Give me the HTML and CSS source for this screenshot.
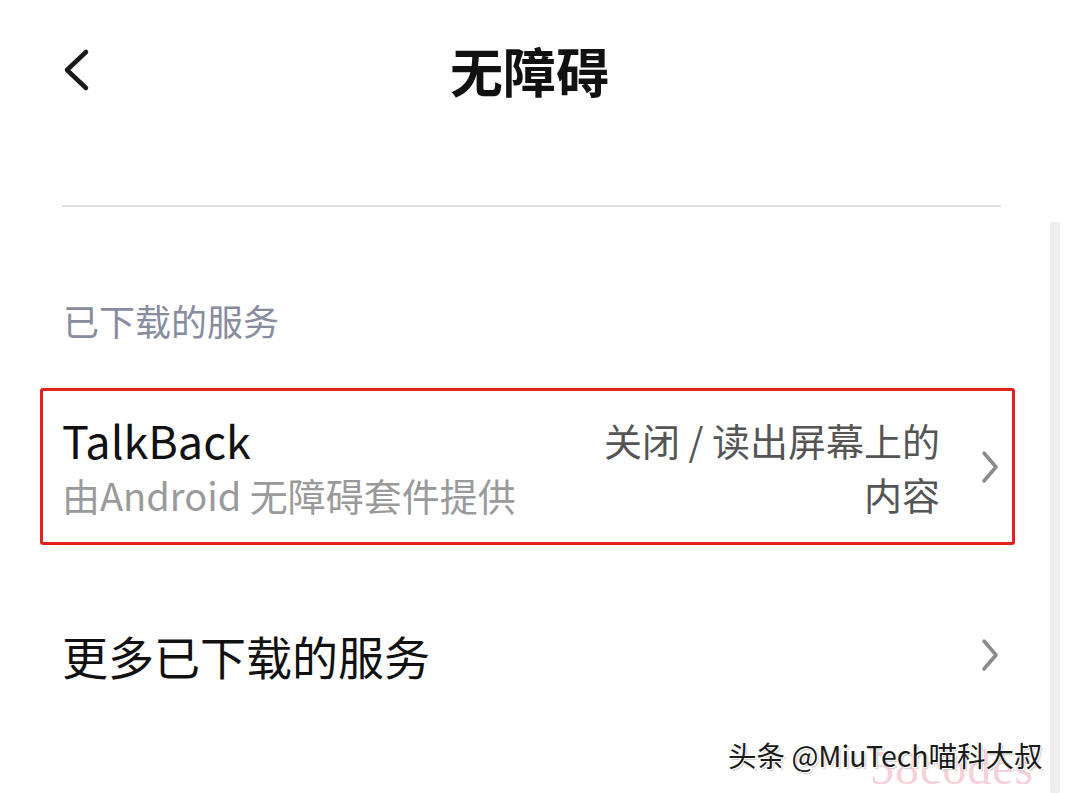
FILE: index.html
```html
<!DOCTYPE html>
<html>
<head>
  <meta charset="utf-8">
  <title>无障碍</title>
  <link rel="stylesheet" href="styles.css">
</head>
<body>
  <div id="screen">
    <div class="topbar">
      <svg class="back" width="28" height="44" viewBox="0 0 28 44">
        <path d="M24 4 L5 22 L24 40" fill="none" stroke="#1a1a1a" stroke-width="4.5" stroke-linecap="round" stroke-linejoin="round"/>
      </svg>
      <h1 class="title">无障碍</h1>
      <span></span>
    </div>

    <div class="divider"></div>

    <div class="section-title">已下载的服务</div>

    <div class="row row-marked">
      <div class="row-main">
        <div class="row-name">TalkBack</div>
        <div class="row-sub">由Android 无障碍套件提供</div>
      </div>
      <div class="row-value">关闭 / 读出屏幕上的<br>内容</div>
      <svg class="chevron" width="20" height="34" viewBox="0 0 20 34">
        <path d="M4 3 L16 17 L4 31" fill="none" stroke="#8a8a8a" stroke-width="3.5" stroke-linecap="round" stroke-linejoin="round"/>
      </svg>
    </div>

    <div class="row row-plain">
      <div class="row-main">
        <div class="row-name row-name-big">更多已下载的服务</div>
      </div>
      <svg class="chevron" width="20" height="34" viewBox="0 0 20 34">
        <path d="M4 3 L16 17 L4 31" fill="none" stroke="#8a8a8a" stroke-width="3.5" stroke-linecap="round" stroke-linejoin="round"/>
      </svg>
    </div>

    <div class="scroll-track"></div>

    <div class="watermark">
      <span class="wm-pink">58codes</span>
      <span class="wm-text">头条 @MiuTech喵科大叔</span>
    </div>
  </div>
</body>
</html>
```

FILE: styles.css
```css
body {
  margin: 0;
  background-color: #ffffff;
  font-family: "Noto Sans CJK SC", "Noto Sans", sans-serif;
  color: #111111;
}

#screen {
  position: relative;
  width: 1069px;
  height: 793px;
  overflow: hidden;
}

.topbar {
  height: 140px;
  padding: 0 62px;
  display: grid;
  grid-template-columns: 1fr auto 1fr;
  align-items: center;
}

.back {
  display: block;
}

.title {
  margin: 0;
  font-size: 53px;
  font-weight: 700;
  line-height: 1;
  color: #111111;
  padding-right: 10px;
}

.divider {
  margin: 65px 68px 0 62px;
  height: 2px;
  background-color: #e3e3e3;
}

.section-title {
  margin: 92px 0 0 63px;
  font-size: 36px;
  line-height: 42px;
  color: #878c9f;
}

.row {
  display: flex;
  align-items: center;
}

.row-marked {
  margin: 47px 54px 0 40px;
  height: 151px;
  padding: 0 12px 0 19px;
  border: 3px solid #e3211f;
  border-radius: 3px;
}

.row-plain {
  margin: 55px 69px 0 62px;
  height: 110px;
}

.row-main {
  flex: 1;
}

.row-name {
  font-size: 45px;
  line-height: 56px;
  color: #111111;
}

.row-name-big {
  font-size: 46px;
}

.row-sub {
  font-size: 38px;
  line-height: 54px;
  color: #9a9a9a;
}

.row-value {
  font-size: 38px;
  line-height: 54px;
  color: #555555;
  text-align: right;
  margin-right: 40px;
}

.chevron {
  display: block;
}

.scroll-track {
  position: absolute;
  left: 1050px;
  top: 222px;
  width: 10px;
  bottom: 0;
  background-color: #eeeeee;
  border-radius: 2px;
}

.watermark {
  position: absolute;
  left: 728px;
  top: 728px;
  width: 335px;
  height: 65px;
}

.wm-text {
  position: absolute;
  left: 0;
  top: 8px;
  font-size: 28.5px;
  line-height: 38px;
  color: #1a1a1a;
  white-space: nowrap;
  text-shadow: 1px 1px 0 #ffffff, -1px -1px 0 #ffffff, 2px 2px 1px #cccccc;
}

.wm-pink {
  position: absolute;
  left: 142px;
  top: 14px;
  font-family: "Liberation Serif", serif;
  font-size: 48px;
  line-height: 52px;
  color: rgba(236, 150, 170, 0.45);
  letter-spacing: 1px;
}
```
